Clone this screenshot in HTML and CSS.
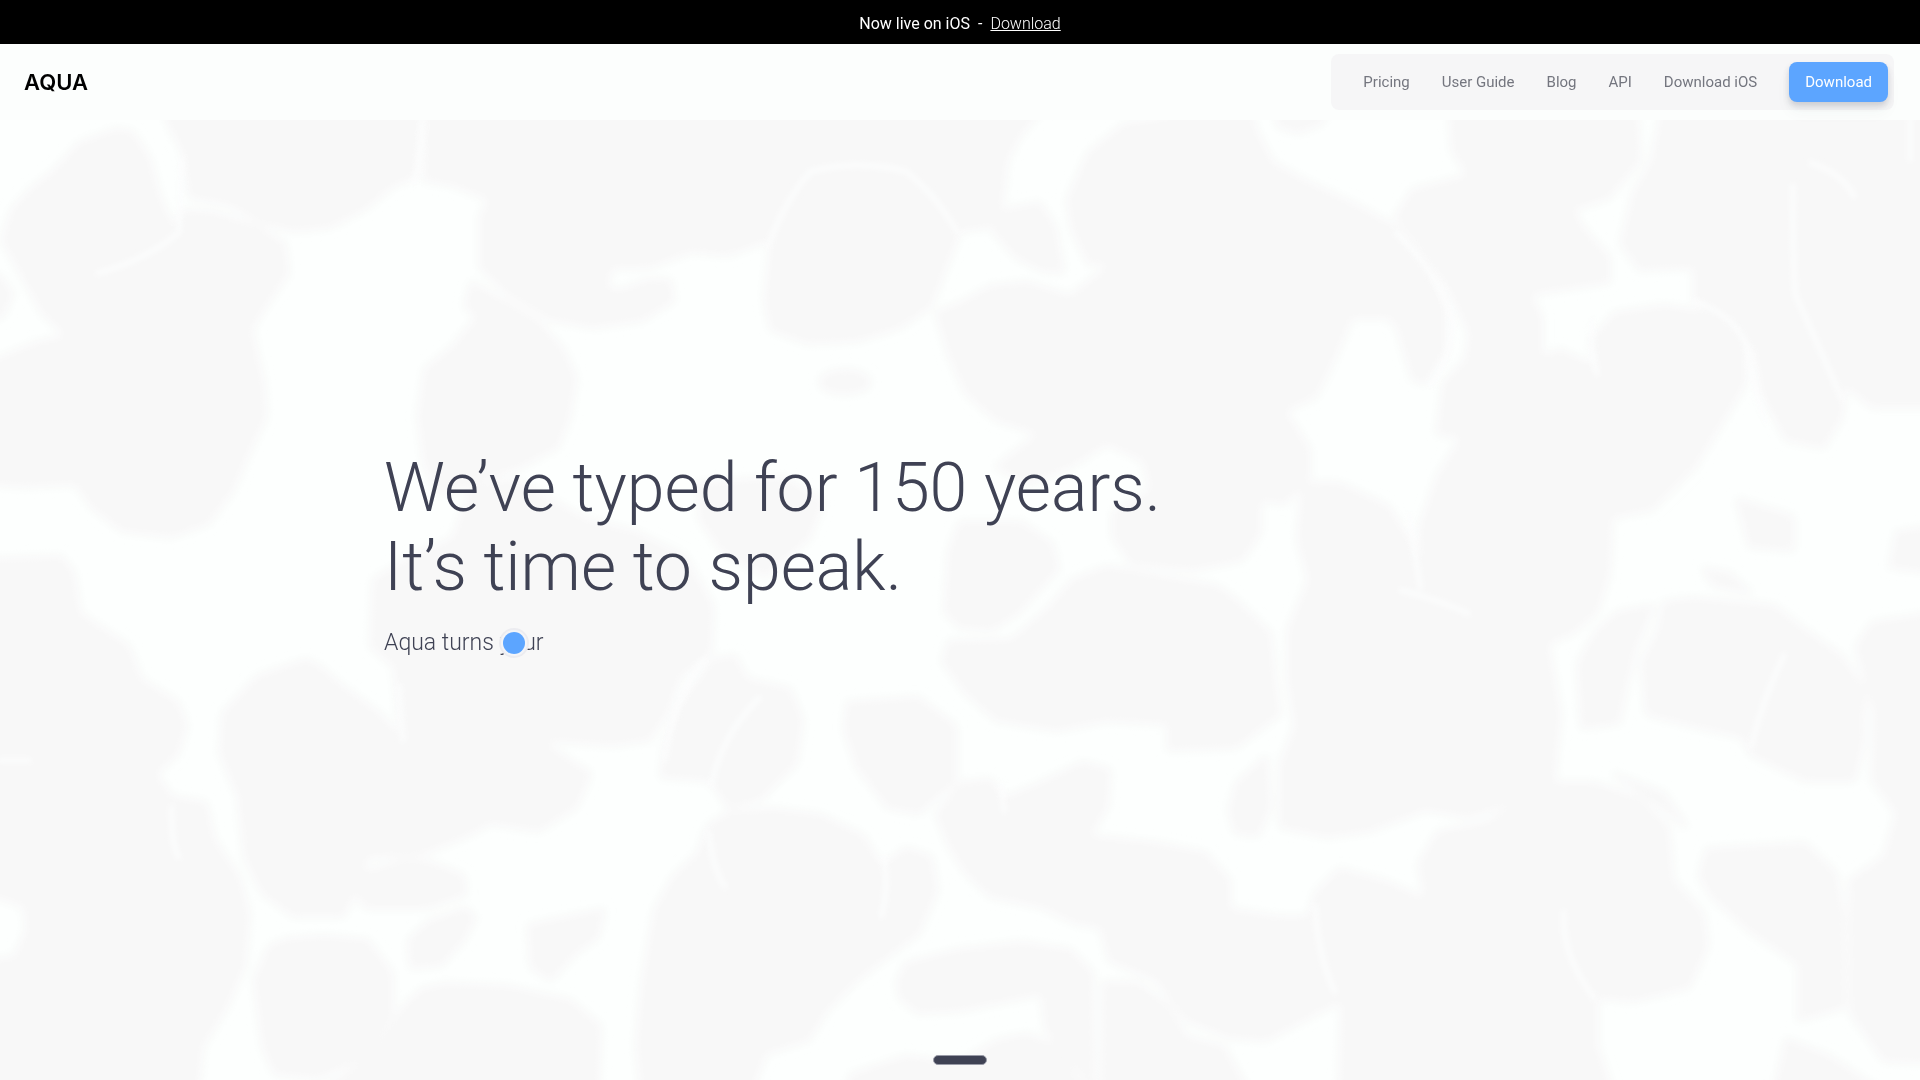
FILE: index.html
```html
<!DOCTYPE html>
<html lang="en">
  <head>
    <meta charset="UTF-8" />
    <meta name="viewport" content="width=device-width, initial-scale=1.0" />
    <title>Aqua</title>
    <link rel="stylesheet" href="styles.css">
  </head>
  <body>
    <!-- Water caustics behind the page -->
    <svg class="water" viewBox="0 0 1568 882" preserveAspectRatio="xMidYMid slice" aria-hidden="true">
      <defs>
        <filter id="soft" x="-5%" y="-5%" width="110%" height="110%">
          <feGaussianBlur stdDeviation="4" />
        </filter>
        <filter id="soft-line" x="-5%" y="-5%" width="110%" height="110%">
          <feGaussianBlur stdDeviation="2" />
        </filter>
      </defs>
      <g class="cells" filter="url(#soft)">
        <!-- top left -->
        <polygon points="95,106 108,108 122,130 130,160 142,188 150,172 175,174 210,185 232,199 235,223 220,245 205,269 215,313 217,340 205,365 190,400 170,427 140,438 100,433 75,414 62,395 20,397 -10,395 -10,297 30,280 55,275 35,256 20,229 2,196 10,171 25,155 45,139 65,117" />
        <polygon points="-10,220 2,228 10,240 2,258 -10,262" />
        <polygon points="133,80 137,100 150,125 155,161 185,166 215,182 240,188 270,185 300,169 320,152 339,144 344,80" />
        <polygon points="349,80 347,147 370,151 400,163 392,177 392,218 415,240 450,261 485,267 525,261 550,245 547,229 530,229 505,238 495,234 500,218 530,218 565,205 595,208 630,195 625,245 630,269 660,280 700,278 735,267 760,250 784,188 809,185 819,163 822,131 834,109 860,80" />
        <polygon points="385,231 380,250 390,259 370,283 347,302 342,340 347,381 360,403 425,381 455,365 465,340 470,308 460,286 440,263 415,248" />
        <ellipse cx="690" cy="312" rx="20" ry="9" />
        <!-- top centre -->
        <polygon points="919,101 944,98 1019,80 1025,105 1039,133 1064,147 1104,166 1139,185 1165,218 1180,250 1180,286 1164,313 1154,310 1141,267 1134,259 1104,259 1089,294 1074,324 1049,335 1069,367 1069,389 1049,411 1029,408 1029,435 1014,457 974,465 924,460 909,438 909,419 940,400 934,376 904,362 874,381 840,395 814,381 849,354 814,343 789,321 775,290 765,255 784,248 809,234 839,231 874,242 909,215 889,215 876,188 872,163 889,125" />
        <polygon points="849,166 862,186 868,222 852,221 830,210 812,190 818,172" />
        <polygon points="1039,80 1084,80 1080,100 1060,108 1044,103" />
        <!-- top right -->
        <polygon points="1184,80 1336,80 1339,131 1314,161 1284,171 1294,188 1314,210 1314,230 1249,240 1259,259 1259,288 1224,321 1194,357 1174,354 1179,313 1197,294 1200,272 1182,234 1167,212 1140,177 1154,155 1199,144 1186,122" />
        <polygon points="1359,80 1580,80 1580,332 1529,332 1506,313 1504,340 1489,365 1459,359 1439,321 1433,286 1422,268 1384,245 1384,218 1339,220 1324,199 1334,158 1349,131" />
        <!-- middle -->
        <polygon points="305,474 335,455 370,440 385,398 420,392 480,425 520,435 560,455 582,495 580,532 555,553 545,581 530,604 500,608 440,604 482,632 470,659 440,678 400,672 380,683 345,697 300,700 288,732 280,748 240,748 215,730 200,700 195,651 180,615 182,583 210,553 250,539 260,544 280,561 310,583 328,604 322,544 303,528" />
        <polygon points="570,395 640,390 672,410 660,440 625,470 590,450 572,425" />
        <polygon points="582,539 600,536 610,555 645,563 655,588 650,623 620,653 595,659 580,637 540,634 543,610 555,577" />
        <polygon points="692,574 750,570 780,593 780,637 750,664 725,659 700,626 690,596" />
        <polygon points="784,427 834,427 859,444 864,465 855,474 832,500 810,514 784,512 772,500 775,450" />
        <polygon points="904,463 949,471 994,479 1009,490 1037,517 1041,555 1045,583 1009,610 954,612 954,591 904,588 864,596 814,588 789,566 770,540 775,524 826,523 856,497 876,474" />
        <polygon points="1064,395 1094,395 1134,414 1151,441 1164,474 1159,433 1174,389 1194,357 1224,321 1254,294 1274,286 1305,300 1299,278 1319,256 1359,250 1399,256 1425,278 1425,313 1414,332 1384,381 1349,416 1316,422 1314,468 1304,500 1284,517 1264,525 1274,583 1269,637 1224,659 1199,667 1164,661 1119,678 1084,683 1046,675 1046,623 1058,593 1052,555 1052,515 1069,474 1060,440" />
        <polygon points="1034,618 1010,640 1004,662 1009,680 1027,682 1037,659" />
        <!-- right -->
        <polygon points="1359,492 1384,489 1449,495 1474,515 1504,536 1522,563 1522,604 1514,637 1474,637 1429,615 1424,602 1384,593 1345,583 1341,542 1354,515" />
        <polygon points="1322,500 1350,495 1336,528 1328,560 1322,590 1292,594 1289,542 1304,515" />
        <polygon points="1580,501 1529,509 1516,528 1531,583 1529,637 1549,664 1539,700 1511,719 1512,828 1539,866 1580,868" />
        <polygon points="1394,694 1474,689 1499,713 1505,746 1506,822 1469,833 1469,787 1429,760 1398,732 1388,715" />
        <polygon points="1318,632 1359,648 1377,675 1366,666 1336,645" />
        <polygon points="1419,408 1464,422 1464,449 1429,446" />
        <polygon points="1391,465 1412,468 1429,484 1400,478" />
        <polygon points="1580,430 1549,435 1544,463 1580,467" />
        <polygon points="1459,849 1494,863 1534,890 1450,890" />
        <!-- bottom left -->
        <polygon points="-10,457 50,455 60,468 65,501 105,528 115,555 145,574 152,593 145,615 127,632 140,651 168,656 175,686 195,716 203,746 200,787 185,822 165,855 160,900 -10,900 -10,785 12,782 22,760 20,740 -10,730" />
        <polygon points="265,765 235,767 220,773 208,800 215,855 225,877 260,880 300,862 320,828 320,795 300,768" />
        <polygon points="330,822 345,808 365,804 415,806 465,817 490,838 488,900 250,900 305,862" />
        <polygon points="330,703 299,712 292,730 298,741 350,741 380,730 378,715 350,704" />
        <polygon points="380,742 350,753 334,768 336,790 360,788 378,768 388,749" />
        <polygon points="432,756 493,743 488,765 470,778 450,800 434,790" />
        <!-- bottom centre -->
        <polygon points="595,664 630,661 670,666 705,683 720,708 740,693 760,700 765,727 750,762 700,800 675,825 660,849 625,860 610,900 525,900 520,855 525,800 535,743 550,716 570,697 578,675" />
        <polygon points="733,802 740,787 784,776 834,770 874,776 892,795 893,900 884,877 862,850 854,841 851,811 814,819 784,825 750,827 735,815" />
        <polygon points="695,878 740,863 784,868 814,850 839,845 864,855 884,890 690,900" />
        <polygon points="901,803 929,803 954,822 969,847 999,855 1024,900 900,900" />
        <!-- bottom right -->
        <polygon points="784,640 809,637 819,653 849,640 884,623 906,629 904,659 889,683 944,689 984,697 1004,719 1004,743 1044,749 1069,749 1074,730 1094,710 1134,721 1164,735 1159,705 1174,680 1214,672 1234,659 1264,640 1304,640 1339,653 1362,675 1366,719 1391,746 1394,773 1379,806 1334,817 1304,814 1304,855 1319,900 1094,900 1096,817 1074,828 1034,849 1004,847 969,833 944,800 906,784 899,757 879,754 849,740 809,732 789,713 775,690 765,665" />
      </g>
      <g class="ripples" filter="url(#soft-line)">
        <path d="M148,130 Q147,165 146,190 Q120,212 80,223" />
        <path d="M345,98 Q344,130 338,150" />
        <path d="M628,200 Q640,165 662,140 Q700,130 740,140 Q765,160 782,190" />
        <path d="M1140,190 Q1172,220 1186,260 Q1188,290 1168,315" />
        <path d="M1300,260 Q1298,285 1304,305" />
        <path d="M1384,246 Q1428,262 1430,300 Q1434,325 1442,345" />
        <path d="M1464,152 Q1464,200 1466,240 Q1484,280 1504,325" />
        <path d="M1479,133 Q1505,142 1514,160" />
        <path d="M1560,98 L1560,130" />
        <path d="M326,560 L329,604" />
        <path d="M575,539 Q550,570 543,620" />
        <path d="M620,570 Q590,600 581,640" />
        <path d="M579,680 Q582,710 592,724" />
        <path d="M722,700 Q726,725 720,748" />
        <path d="M140,660 Q140,690 146,700" />
        <path d="M0,621 L24,621" />
        <path d="M1144,482 Q1175,490 1199,501" />
        <path d="M1151,420 Q1156,455 1160,480" />
        <path d="M1457,535 Q1440,570 1430,610" />
        <path d="M818,640 L820,662" />
        <path d="M1074,740 Q1076,780 1090,810" />
        <path d="M1277,745 Q1275,780 1302,815" />
      </g>
    </svg>

    <div class="banner">
      <strong>Now live on iOS</strong>
      <span>-</span>
      <a href="#ios">Download</a>
    </div>

    <header>
      <a class="logo" href="#">AQUA</a>
      <nav>
        <a href="#pricing">Pricing</a>
        <a href="#guide">User Guide</a>
        <a href="#blog">Blog</a>
        <a href="#api">API</a>
        <a href="#ios">Download iOS</a>
        <button type="button">Download</button>
      </nav>
    </header>

    <main>
      <div class="hero">
        <h1>We’ve typed for 150 years.<br>It’s time to speak.</h1>
        <p>Aqua turns y<span class="pointer">o</span>ur</p>
      </div>
    </main>

    <div class="dictation-bar"></div>
  </body>
</html>
```
FILE: styles.css
```css
* {
  box-sizing: border-box;
}

body {
  font-family: Roboto, "Liberation Sans", sans-serif;
  margin: 0;
  min-height: 100vh;
  display: flex;
  flex-direction: column;
  background-color: #fdfffe;
  color: #3f4254;
}

.water {
  position: fixed;
  inset: 0;
  width: 100%;
  height: 100%;
  z-index: -1;
}

.cells {
  fill: #f8f8f8;
  stroke: #f8f8f8;
  stroke-width: 4;
  stroke-linejoin: round;
}

.ripples {
  fill: none;
  stroke: #fcfdfd;
  stroke-width: 4;
  stroke-linecap: round;
}

.banner {
  display: flex;
  justify-content: center;
  align-items: center;
  gap: 8px;
  height: 44px;
  padding-top: 2px;
  background-color: #000;
  color: #fff;
  font-size: 16px;
}

.banner strong {
  font-weight: 400;
}

.banner a {
  color: #fff;
  font-weight: 300;
}

header {
  display: flex;
  justify-content: space-between;
  align-items: center;
  height: 76px;
  padding: 0 26px 0 24px;
  background-color: #fcfefd;
}

.logo {
  font-family: Inter, sans-serif;
  font-size: 22px;
  font-weight: 600;
  color: #000;
  text-decoration: none;
}

nav {
  display: flex;
  align-items: center;
  gap: 32px;
  padding: 8px 6px 8px 32px;
  border-radius: 8px;
  background-color: #f6f6f7;
}

nav a {
  font-size: 15px;
  font-weight: 400;
  color: #74767f;
  text-decoration: none;
}

nav button {
  height: 40px;
  padding: 0 16px;
  border: 0;
  border-radius: 8px;
  background-color: #5ca5ff;
  color: #fff;
  font-family: inherit;
  font-size: 15px;
  box-shadow: 0 4px 6px rgba(63, 66, 84, 0.2), 0 10px 16px rgba(63, 66, 84, 0.04);
}

main {
  flex: 1;
  display: flex;
  flex-direction: column;
  justify-content: center;
}

.hero {
  width: 100%;
  max-width: 1152px;
  margin: 0 auto;
}

h1 {
  margin: 0;
  font-size: 68px;
  line-height: 79px;
  font-weight: 300;
}

.hero p {
  min-height: 124px;
  margin: 20px 0 0;
  font-size: 23px;
  line-height: 32px;
  font-weight: 300;
}

.pointer {
  position: relative;
}

.pointer::after {
  content: "";
  position: absolute;
  top: 50%;
  right: -2px;
  width: 22px;
  height: 22px;
  margin-top: -11px;
  border-radius: 50%;
  background-color: #5ca5ff;
  box-shadow: 0 0 0 2px #f4f5f8, 0 0 0 4px #ececf0;
}

.dictation-bar {
  position: fixed;
  bottom: 15px;
  left: 50%;
  width: 54px;
  height: 10px;
  margin-left: -27px;
  border: 1px solid #9a9ca8;
  border-radius: 5px;
  background-color: #3f4254;
}
```
